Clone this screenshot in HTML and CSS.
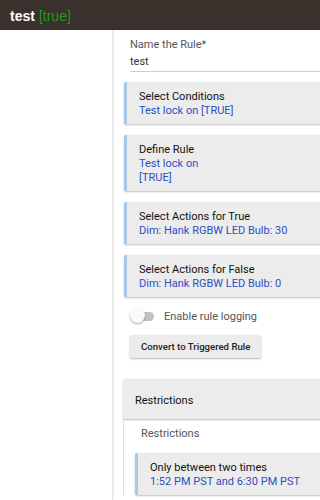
FILE: index.html
```html
<!DOCTYPE html>
<html>
<head>
<meta charset="utf-8">
<link rel="stylesheet" href="styles.css">
</head>
<body>
<header class="topbar">
  <span class="app-title">test</span> <span class="app-state">[true]</span>
</header>
<div class="layout">
  <aside class="sidebar"></aside>
  <main class="content">
    <div class="field">
      <div class="field-label">Name the Rule*</div>
      <div class="field-input">test</div>
    </div>
    <div class="card">
      <div class="card-title">Select Conditions</div>
      <div class="card-value">Test lock on [TRUE]</div>
    </div>
    <div class="card">
      <div class="card-title">Define Rule</div>
      <div class="card-value">Test lock on<br>[TRUE]</div>
    </div>
    <div class="card">
      <div class="card-title">Select Actions for True</div>
      <div class="card-value">Dim: Hank RGBW LED Bulb: 30</div>
    </div>
    <div class="card">
      <div class="card-title">Select Actions for False</div>
      <div class="card-value">Dim: Hank RGBW LED Bulb: 0</div>
    </div>
    <div class="toggle-row">
      <span class="switch"><span class="switch-track"></span><span class="switch-knob"></span></span>
      <span class="toggle-label">Enable rule logging</span>
    </div>
    <button class="btn">Convert to Triggered Rule</button>
    <section class="panel">
      <div class="panel-head">Restrictions</div>
      <div class="panel-body">
        <div class="panel-label">Restrictions</div>
        <div class="card inner">
          <div class="card-title">Only between two times</div>
          <div class="card-value">1:52 PM PST and 6:30 PM PST</div>
        </div>
      </div>
    </section>
  </main>
</div>
</body>
</html>
```

FILE: styles.css
```css
html, body {
  margin: 0;
  padding: 0;
  overflow: hidden;
  background: #fff;
  font-family: Roboto, "Liberation Sans", Arial, sans-serif;
  font-size: 11px;
  color: #222;
}
.topbar {
  height: 30px;
  background: #3a302c;
  padding: 1px 0 0 10px;
  display: flex;
  align-items: center;
  gap: 4px;
  font-family: "Liberation Sans", Arial, sans-serif;
  font-size: 14px;
  box-sizing: border-box;
}
.app-title {
  color: #fff;
  font-weight: bold;
}
.app-state {
  color: #1f9b1f;
}
.layout {
  display: flex;
  min-height: 470px;
}
.sidebar {
  width: 112px;
  flex: none;
  border-right: 1px solid #e4e4e4;
  box-shadow: 1px 0 2px rgba(0,0,0,0.06);
}
.content {
  width: 260px;
  flex: none;
  padding: 8px 0 0 11px;
  display: flex;
  flex-direction: column;
  align-items: stretch;
}
.field {
  margin-left: 6px;
  margin-bottom: 10px;
}
.field-label {
  color: #555;
  line-height: 14px;
}
.field-input {
  color: #333;
  line-height: 16px;
  padding: 2px 0 1px;
  border-bottom: 1px solid #cfcfcf;
}
.card {
  background: #ececec;
  border-left: 3px solid #a8c8ea;
  border-radius: 2px;
  padding: 8px 12px 6px;
  margin-bottom: 11px;
  box-shadow: 0 1px 2px rgba(0,0,0,0.25);
  line-height: 14px;
}
.card-title {
  color: #111;
}
.card-value {
  color: #2c4fc0;
}
.toggle-row {
  display: flex;
  align-items: center;
  gap: 10px;
  margin: 0 0 0 6px;
  height: 16px;
}
.switch {
  position: relative;
  width: 24px;
  height: 16px;
  flex: none;
}
.switch-track {
  position: absolute;
  left: 1px;
  top: 4px;
  width: 23px;
  height: 9px;
  border-radius: 5px;
  background: #c2c2c2;
}
.switch-knob {
  position: absolute;
  left: 0;
  top: 0;
  width: 15px;
  height: 15px;
  border-radius: 50%;
  background: #fafafa;
  box-shadow: 0 1px 2px rgba(0,0,0,0.35);
}
.toggle-label {
  color: #555;
}
.btn {
  align-self: flex-start;
  margin: 11px 0 0 6px;
  height: 23px;
  padding: 0 11px;
  border: none;
  border-radius: 2px;
  background: #ececec;
  box-shadow: 0 1px 2px rgba(0,0,0,0.3);
  font-family: Roboto, "Liberation Sans", Arial, sans-serif;
  font-size: 9.6px;
  font-weight: 500;
  color: #222;
}
.panel {
  margin-top: 21px;
  margin-left: -1px;
}
.panel-head {
  background: #ececec;
  height: 40px;
  line-height: 44px;
  padding-left: 12px;
  color: #111;
  border-radius: 2px 2px 0 0;
  box-shadow: 0 1px 2px rgba(0,0,0,0.25);
}
.panel-body {
  border-left: 1px solid #dcdcdc;
  padding: 8px 0 0 11px;
}
.panel-label {
  color: #555;
  line-height: 14px;
  margin-bottom: 12px;
  margin-left: 6px;
}
.inner {
  margin-bottom: 0;
}
```
